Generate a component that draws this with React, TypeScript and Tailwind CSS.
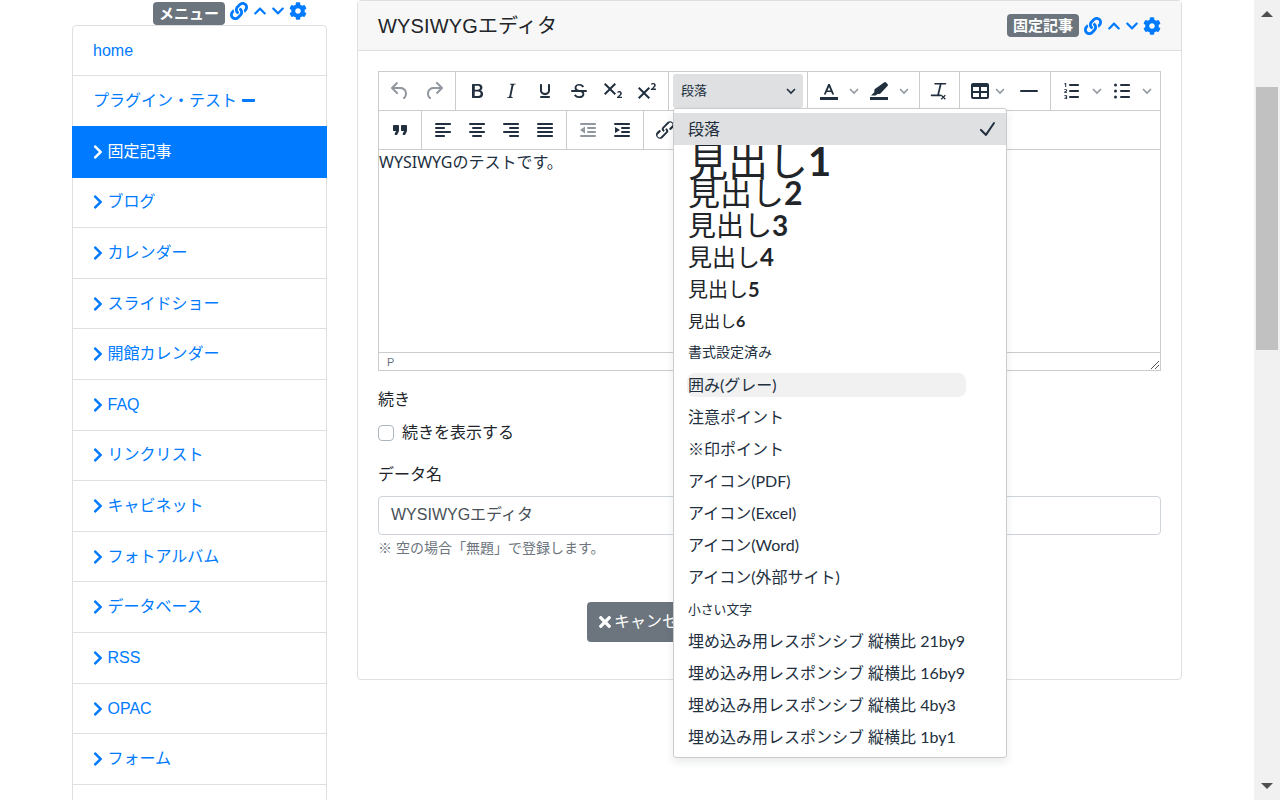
import type { ReactNode } from 'react';
import { FaChevronDown, FaChevronRight, FaChevronUp, FaCog, FaLink, FaMinus, FaTimes } from 'react-icons/fa';

const menuItems = [
  'ブログ',
  'カレンダー',
  'スライドショー',
  '開館カレンダー',
  'FAQ',
  'リンクリスト',
  'キャビネット',
  'フォトアルバム',
  'データベース',
  'RSS',
  'OPAC',
  'フォーム',
  '検索',
];

const icons: Record<string, ReactNode> = {
  undo: <path d="M6.4 8H12c3.7 0 6.2 2 6.8 5.1.6 2.7-.4 5.6-2.3 6.8a1 1 0 0 1-1-1.8c1.1-.6 1.8-2.7 1.4-4.6-.5-2.1-2.1-3.5-4.9-3.5H6.4l3.3 3.3a1 1 0 1 1-1.4 1.4l-5-5a1 1 0 0 1 0-1.4l5-5a1 1 0 0 1 1.4 1.4L6.4 8z" />,
  redo: <path d="M17.6 10H12c-2.8 0-4.4 1.4-4.9 3.5-.4 2 .3 4 1.4 4.6a1 1 0 1 1-1 1.8c-2-1.2-2.9-4.1-2.3-6.8.6-3 3-5.1 6.8-5.1h5.6l-3.3-3.3a1 1 0 1 1 1.4-1.4l5 5a1 1 0 0 1 0 1.4l-5 5a1 1 0 0 1-1.4-1.4l3.3-3.3z" />,
  bold: <path fillRule="evenodd" d="M7.8 19c-.3 0-.5 0-.6-.2l-.2-.5V5.7c0-.2 0-.4.2-.5l.6-.2h5c1.5 0 2.7.3 3.5 1 .7.6 1.1 1.4 1.1 2.5a3 3 0 0 1-.6 1.9c-.4.6-1 1-1.6 1.2.9.1 1.6.5 2.1 1.1.5.6.8 1.4.8 2.3 0 1.2-.4 2.2-1.2 2.9-.8.7-2 1.1-3.6 1.1H7.8zm4.6-8.2c1.7 0 2.6-.7 2.6-2 0-1.4-.9-2-2.6-2H9.8v4h2.6zm.4 6.2c1.9 0 2.8-.8 2.8-2.2 0-1.5-1-2.2-2.9-2.2h-3V17h3.1z" />,
  italic: <path d="M16.7 4.7l-.1.9h-.3c-.6 0-1 0-1.4.3-.3.3-.4.6-.5 1.1l-2.1 9.8v.6c0 .5.4.8 1.4.8h.2l-.2.8H8l.2-.8h.2c1.1 0 1.8-.5 2-1.5l2-9.8.1-.5c0-.6-.4-.8-1.4-.8h-.3l.2-.9h5.8z" />,
  underline: <path d="M16 5c.6 0 1 .4 1 1v5.5a4 4 0 0 1-.4 1.8l-1 1.4a5.3 5.3 0 0 1-5.5 1 5 5 0 0 1-1.6-1c-.5-.4-.8-.9-1.1-1.4a4 4 0 0 1-.4-1.8V6c0-.6.4-1 1-1s1 .4 1 1v5.5c0 .3 0 .6.2 1l.6.7a3.3 3.3 0 0 0 2.2.8 3.4 3.4 0 0 0 2.2-.8c.3-.2.4-.5.6-.8l.2-.9V6c0-.6.4-1 1-1zM8 17h8c.6 0 1 .4 1 1s-.4 1-1 1H8a1 1 0 0 1 0-2z" />,
  strike: <path d="M15.6 8.5c-.5-.7-1-1.1-1.3-1.3-.6-.4-1.3-.6-2-.6-2.7 0-2.8 1.7-2.8 2.1 0 1.6 1.8 2 3.2 2.3 4.4.9 4.6 2.8 4.6 3.9 0 1.4-.7 4.1-5 4.1A6.2 6.2 0 0 1 7 16.4l1.5-1.1c.4.6 1.6 2 3.7 2 1.6 0 2.5-.4 3-1.2.4-.8.3-2-.8-2.6-.7-.4-1.6-.7-2.9-1-1-.2-3.9-.8-3.9-3.6C7.6 6 10.3 5 12.4 5c2.9 0 4.2 1.6 4.7 2.4l-1.5 1.1zM5 11h14a1 1 0 0 1 0 2H5a1 1 0 0 1 0-2z" />,
  sub: <path d="M10.4 10l4.6 4.6-1.4 1.4L9 11.4 4.4 16 3 14.6 7.6 10 3 5.4 4.4 4 9 8.6 13.6 4 15 5.4 10.4 10zM21 19h-5v-1l1-.8 1.7-1.6c.3-.4.5-.8.5-1.2 0-.3 0-.6-.2-.7-.2-.2-.5-.3-.9-.3a2 2 0 0 0-.8.2l-.7.3-.4-1.1 1-.6 1.2-.2c.8 0 1.4.3 1.8.7.4.4.6.9.6 1.5s-.2 1.1-.5 1.6a8 8 0 0 1-1.3 1.3l-.6.6h2.6V19z" />,
  sup: <path d="M15 9.4L10.4 14l4.6 4.6-1.4 1.4L9 15.4 4.4 20 3 18.6 7.6 14 3 9.4 4.4 8 9 12.6 13.6 8 15 9.4zm5.9 1.6h-5v-1l1-.8 1.7-1.6c.3-.5.5-.9.5-1.3 0-.3 0-.5-.2-.7-.2-.2-.5-.3-.9-.3l-.8.2-.7.4-.4-1.2c.2-.2.5-.4 1-.5.3-.2.8-.2 1.2-.2.8 0 1.4.2 1.8.6.4.4.6 1 .6 1.6 0 .5-.2 1-.5 1.5l-1.3 1.4-.6.5h2.6V11z" />,
  textColor: (
    <>
      <path fillRule="evenodd" d="M12.8 5l4.4 10.6h-2l-1-2.6H9.8l-1 2.6h-2L11.2 5h1.6zm-.8 2.9L10.5 11.4h3L12 7.9z" />
      <rect x="3" y="18" width="18" height="3" />
    </>
  ),
  highlight: (
    <>
      <path d="M17 3.4a1.5 1.5 0 0 1 2 0l1.500 1.500a1.500 1.500 0 0 1 0 2.100l-6.800 7.300a2 2 0 0 1-1.400.6H10.500L8.500 16.500H4l3.300-3.300v-1.700c0-.5.2-1 .6-1.400L17 3.400z" />
      <rect x="3" y="18" width="18" height="3" />
    </>
  ),
  removeFormat: (
    <>
      <path d="M9 4h10.500a.8.8 0 0 1 0 1.600h-4l-2.400 10h1.400a.8.8 0 0 1 0 1.600H5.500a.8.8 0 0 1 0-1.600h5.800l2.400-10H9A.8.8 0 0 1 9 4z" />
      <path d="M15.700 15.700l1.600 1.600 1.600-1.600.9.900-1.600 1.600 1.600 1.600-.9.900-1.600-1.600-1.600 1.600-.9-.9 1.600-1.600-1.600-1.600z" />
    </>
  ),
  table: <path fillRule="evenodd" d="M19 4a2 2 0 0 1 2 2v12a2 2 0 0 1-2 2H5a2 2 0 0 1-2-2V6c0-1.100.9-2 2-2h14zM5 14v4h6v-4H5zm8 0v4h6v-4h-6zm0-6v4h6V8h-6zM5 8v4h6V8H5z" />,
  hr: <path d="M4 11h16a1 1 0 0 1 0 2H4a1 1 0 0 1 0-2z" />,
  numlist: (
    <>
      <path d="M10 17h8c.6 0 1 .4 1 1s-.4 1-1 1h-8a1 1 0 0 1 0-2zm0-6h8c.6 0 1 .4 1 1s-.4 1-1 1h-8a1 1 0 0 1 0-2zm0-6h8c.6 0 1 .4 1 1s-.4 1-1 1h-8a1 1 0 1 1 0-2z" />
      <path d="M5.200 4h1v4h-1V5.100l-.8.300V4.500L5.200 4zM4.300 10.300h2.200c.4 0 .6.300.6.600v1c0 .3-.2.5-.5.600l-1.300.5v.2h1.800v.8H4.300v-1.200c0-.3.2-.5.5-.6l1.300-.5v-.6H4.300v-.8zM4.300 16.300h2.800v3.700H4.300v-.8h1.800v-.7H4.800v-.7h1.300v-.7H4.300v-.8z" />
    </>
  ),
  bullist: (
    <>
      <path d="M11 5h8c.6 0 1 .4 1 1s-.4 1-1 1h-8a1 1 0 0 1 0-2zm0 6h8c.6 0 1 .4 1 1s-.4 1-1 1h-8a1 1 0 0 1 0-2zm0 6h8c.6 0 1 .4 1 1s-.4 1-1 1h-8a1 1 0 0 1 0-2z" />
      <circle cx="5.500" cy="6" r="1.500" />
      <circle cx="5.500" cy="12" r="1.500" />
      <circle cx="5.500" cy="18" r="1.500" />
    </>
  ),
  quote: <path d="M7.500 17h.9c.4 0 .7-.2.9-.6L11 13V8c0-.6-.4-1-1-1H6a1 1 0 0 0-1 1v4c0 .6.4 1 1 1h2l-1.300 2.700a1 1 0 0 0 .8 1.300zm8 0h.9c.4 0 .7-.2.9-.6L19 13V8c0-.6-.4-1-1-1h-4a1 1 0 0 0-1 1v4c0 .6.4 1 1 1h2l-1.300 2.700a1 1 0 0 0 .8 1.300z" />,
  alignLeft: <path d="M5 5h14c.6 0 1 .4 1 1s-.4 1-1 1H5a1 1 0 1 1 0-2zm0 4h8c.6 0 1 .4 1 1s-.4 1-1 1H5a1 1 0 1 1 0-2zm0 8h8c.6 0 1 .4 1 1s-.4 1-1 1H5a1 1 0 0 1 0-2zm0-4h14c.6 0 1 .4 1 1s-.4 1-1 1H5a1 1 0 0 1 0-2z" />,
  alignCenter: <path d="M5 5h14c.6 0 1 .4 1 1s-.4 1-1 1H5a1 1 0 1 1 0-2zm3 4h8c.6 0 1 .4 1 1s-.4 1-1 1H8a1 1 0 1 1 0-2zm0 8h8c.6 0 1 .4 1 1s-.4 1-1 1H8a1 1 0 0 1 0-2zm-3-4h14c.6 0 1 .4 1 1s-.4 1-1 1H5a1 1 0 0 1 0-2z" />,
  alignRight: <path d="M5 5h14c.6 0 1 .4 1 1s-.4 1-1 1H5a1 1 0 1 1 0-2zm6 4h8c.6 0 1 .4 1 1s-.4 1-1 1h-8a1 1 0 0 1 0-2zm0 8h8c.6 0 1 .4 1 1s-.4 1-1 1h-8a1 1 0 0 1 0-2zm-6-4h14c.6 0 1 .4 1 1s-.4 1-1 1H5a1 1 0 0 1 0-2z" />,
  justify: <path d="M5 5h14c.6 0 1 .4 1 1s-.4 1-1 1H5a1 1 0 1 1 0-2zm0 4h14c.6 0 1 .4 1 1s-.4 1-1 1H5a1 1 0 1 1 0-2zm0 4h14c.6 0 1 .4 1 1s-.4 1-1 1H5a1 1 0 0 1 0-2zm0 4h14c.6 0 1 .4 1 1s-.4 1-1 1H5a1 1 0 0 1 0-2z" />,
  outdent: <path d="M5 5h14c.6 0 1 .4 1 1s-.4 1-1 1H5a1 1 0 1 1 0-2zm7 4h7c.6 0 1 .4 1 1s-.4 1-1 1h-7a1 1 0 0 1 0-2zm0 4h7c.6 0 1 .4 1 1s-.4 1-1 1h-7a1 1 0 0 1 0-2zm-7 4h14a1 1 0 0 1 0 2H5a1 1 0 0 1 0-2zm4-8.500v7L4 12l5-3.500z" />,
  indent: <path d="M5 5h14c.6 0 1 .4 1 1s-.4 1-1 1H5a1 1 0 1 1 0-2zm7 4h7c.6 0 1 .4 1 1s-.4 1-1 1h-7a1 1 0 0 1 0-2zm0 4h7c.6 0 1 .4 1 1s-.4 1-1 1h-7a1 1 0 0 1 0-2zm-7 4h14a1 1 0 0 1 0 2H5a1 1 0 0 1 0-2zM5 9l5 3-5 3V9z" />,
  link: <path d="M6.200 12.300a1 1 0 0 1 1.400 1.400l-2 2a2 2 0 1 0 2.600 2.800l4.800-4.800a1 1 0 0 0 0-1.400 1 1 0 1 1 1.300-1.400 3 3 0 0 1 0 4.200l-4.800 4.800a4 4 0 0 1-5.600-5.600l2.300-2.400zm11.600-.6a1 1 0 0 1-1.400-1.400l2-2a2 2 0 1 0-2.600-2.800l-4.800 4.800a1 1 0 0 0 0 1.400 1 1 0 1 1-1.300 1.400 3 3 0 0 1 0-4.200l4.800-4.800a4 4 0 0 1 5.600 5.600l-2.300 2.400z" />,
};

function ToolIcon({ name, dim }: { name: string; dim?: boolean }) {
  return (
    <svg viewBox="0 0 24 24" className={`size-6 fill-current ${dim ? 'text-[#222f3e]/50' : 'text-[#222f3e]'}`}>
      {icons[name]}
    </svg>
  );
}

function Chevron() {
  return (
    <svg viewBox="0 0 10 10" className="size-[10px] fill-none stroke-[#222f3e]/50 stroke-[1.6]">
      <path d="M1 3l4 4 4-4" />
    </svg>
  );
}

function Btn({ name, dim }: { name: string; dim?: boolean }) {
  return (
    <div className="flex h-[34px] w-[34px] shrink-0 items-center justify-center">
      <ToolIcon name={name} dim={dim} />
    </div>
  );
}

function Caret() {
  return (
    <div className="flex h-[34px] w-4 shrink-0 items-center justify-center">
      <Chevron />
    </div>
  );
}

function Group({ children, className = '' }: { children: ReactNode; className?: string }) {
  return <div className={`flex h-full items-center border-r border-[#ccc] px-1 ${className}`}>{children}</div>;
}

function Toolbar() {
  return (
    <>
      <div className="flex h-[39px] items-center border-b border-[#ccc]">
        <Group>
          <Btn name="undo" dim />
          <Btn name="redo" dim />
        </Group>
        <Group>
          <Btn name="bold" />
          <Btn name="italic" />
          <Btn name="underline" />
          <Btn name="strike" />
          <Btn name="sub" />
          <Btn name="sup" />
        </Group>
        <Group>
          <div className="flex h-[34px] w-[130px] items-center justify-between rounded-[3px] bg-[#dee0e2] pl-2 pr-[7px] leading-none text-[#222f3e]">
            <span className="mb-[3px] font-['Noto_Sans_CJK_JP',sans-serif] text-[13px]">段落</span>
            <svg viewBox="0 0 10 10" className="size-[10px] fill-none stroke-[#222f3e] stroke-[1.6]">
              <path d="M1 3l4 4 4-4" />
            </svg>
          </div>
        </Group>
        <Group className="pr-[7px]">
          <Btn name="textColor" />
          <Caret />
          <Btn name="highlight" />
          <Caret />
        </Group>
        <Group className="pl-px">
          <Btn name="removeFormat" />
        </Group>
        <Group>
          <div className="flex h-[34px] w-[48px] items-center pl-1">
            <ToolIcon name="table" />
            <div className="ml-[3px]">
              <Chevron />
            </div>
          </div>
          <Btn name="hr" />
        </Group>
        <div className="flex h-full items-center px-1">
          <Btn name="numlist" />
          <Caret />
          <Btn name="bullist" />
          <Caret />
        </div>
      </div>
      <div className="flex h-[39px] items-center border-b border-[#ccc]">
        <Group>
          <Btn name="quote" />
        </Group>
        <Group>
          <Btn name="alignLeft" />
          <Btn name="alignCenter" />
          <Btn name="alignRight" />
          <Btn name="justify" />
        </Group>
        <Group>
          <Btn name="outdent" dim />
          <Btn name="indent" />
        </Group>
        <div className="flex h-full items-center px-1">
          <Btn name="link" />
        </div>
      </div>
    </>
  );
}

function Option({ children, className = '' }: { children: ReactNode; className?: string }) {
  return (
    <div className={`flex h-8 items-center whitespace-nowrap pl-[14px] text-[#222f3e] ${className}`}>{children}</div>
  );
}

function Heading({ size, n }: { size: string; n: number }) {
  return (
    <Option>
      <span className={`leading-none text-[#212529] ${size}`}>
        見出し<span className="font-bold">{n}</span>
      </span>
    </Option>
  );
}

function StyleMenu() {
  return (
    <div className="absolute left-[673px] top-[108px] z-10 h-[650px] w-[334px] rounded-[3px] border border-[#ccc] bg-white pt-1 font-['Lato','Noto_Sans_CJK_JP',sans-serif] text-[16px] shadow-[0_4px_8px_0_rgba(34,47,62,0.1)]">
      <Option className="relative bg-[#dee0e2]">
        <span>段落</span>
        <svg viewBox="0 0 24 24" className="absolute right-[7px] top-1 size-6 fill-[#222f3e]">
          <path d="M18.200 5.400a1 1 0 0 1 1.600 1.200l-8 12a1 1 0 0 1-1.500.1l-5-5a1 1 0 1 1 1.400-1.400l4.100 4 7.400-10.900z" />
        </svg>
      </Option>
      <Heading size="text-[40px]" n={1} />
      <Heading size="text-[32px]" n={2} />
      <Heading size="text-[28px]" n={3} />
      <Heading size="text-[24px]" n={4} />
      <Heading size="text-[20px]" n={5} />
      <Heading size="text-[16px]" n={6} />
      <Option className="text-[14px]">
        <span className="mb-[2px]">書式設定済み</span>
      </Option>
      <Option>
        <span className="-ml-px block w-[279px] rounded-lg bg-[#f1f1f1] pl-px leading-6">囲み(グレー)</span>
      </Option>
      <Option>注意ポイント</Option>
      <Option>※印ポイント</Option>
      <Option>アイコン(PDF)</Option>
      <Option>アイコン(Excel)</Option>
      <Option>アイコン(Word)</Option>
      <Option>アイコン(外部サイト)</Option>
      <Option className="text-[12.8px]">小さい文字</Option>
      <Option>埋め込み用レスポンシブ 縦横比 21by9</Option>
      <Option>埋め込み用レスポンシブ 縦横比 16by9</Option>
      <Option>埋め込み用レスポンシブ 縦横比 4by3</Option>
      <Option>埋め込み用レスポンシブ 縦横比 1by1</Option>
    </div>
  );
}

function FrameActions() {
  return (
    <div className="flex items-center text-[#007bff]">
      <FaLink className="ml-[5px] size-[18px]" />
      <FaChevronUp className="ml-[5px] size-[14px]" />
      <FaChevronDown className="ml-1 size-[14px]" />
      <FaCog className="ml-1 size-[18px]" />
    </div>
  );
}

function Badge({ children }: { children: ReactNode }) {
  return (
    <span className="inline-block h-[23px] rounded-[4px] bg-[#6c757d] px-[6px] text-[15px] font-bold leading-[23px] text-white">
      {children}
    </span>
  );
}

export default function App() {
  return (
    <div className="relative flex h-screen w-[1280px] overflow-hidden bg-white font-['Liberation_Sans','Noto_Sans_CJK_JP',sans-serif] text-[16px] leading-6 text-[#212529]">
      <div className="flex w-[1254px] shrink-0 pl-[72px]">
        <aside className="w-[255px] shrink-0">
          <div className="flex h-[25px] items-start justify-end pr-5 pt-[2px]">
            <Badge>メニュー</Badge>
            <FrameActions />
          </div>
          <nav className="rounded-t-[4px] border border-[#dfdfdf] text-[#007bff]">
            <div className="flex h-[50px] items-center border-b border-[#dfdfdf] px-5">home</div>
            <div className="flex h-[50.62px] items-center border-b border-[#dfdfdf] px-5">
              プラグイン・テスト
              <FaMinus className="ml-[4px] size-[15px]" />
            </div>
            <div className="-mx-px -mt-px flex h-[52px] items-center bg-[#007bff] px-[21px] text-white">
              <FaChevronRight className="mr-[4.5px] h-4 w-[10px]" />
              固定記事
            </div>
            {menuItems.map((label) => (
              <div key={label} className="flex h-[50.62px] items-center border-b border-[#dfdfdf] px-5">
                <FaChevronRight className="mr-[4.5px] h-4 w-[10px]" />
                {label}
              </div>
            ))}
          </nav>
        </aside>

        <main className="ml-[30px] w-[825px] shrink-0">
          <div className="h-[680px] rounded-[4px] border border-[#dfdfdf]">
            <div className="flex h-[50px] items-center justify-between border-b border-[#dfdfdf] bg-[#f7f7f7] px-5">
              <h2 className="text-[20px] leading-6 tracking-[0.15px]">WYSIWYGエディタ</h2>
              <div className="flex items-center">
                <Badge>固定記事</Badge>
                <FrameActions />
              </div>
            </div>
            <div className="px-5 pt-5">
              <div className="h-[300px] w-[783px] border border-[#ccc]">
                <Toolbar />
                <div className="h-[202px] font-['Noto_Sans','Noto_Sans_CJK_JP',sans-serif] text-[16px] leading-6 text-[#222f3e]">
                  WYSIWYGのテストです。
                </div>
                <div className="relative flex h-[18px] items-center border-t border-[#ccc] pl-2 text-[11px] text-[#222f3e]/70">
                  P
                  <svg viewBox="0 0 10 10" className="absolute bottom-0 right-0 size-[10px] stroke-[#555] stroke-1">
                    <path d="M1 9l8-8M5 9l4-4" />
                  </svg>
                </div>
              </div>
              <div className="mt-[17px]">続き</div>
              <label className="mt-[9px] flex items-center">
                <span className="block size-4 rounded-[4px] border border-[#adb5bd] bg-white" />
                <span className="ml-2">続きを表示する</span>
              </label>
              <div className="mt-[18px]">データ名</div>
              <div className="mt-[9px] flex h-[39px] w-[783px] items-center rounded-[4px] border border-[#ced4da] px-3 text-[#495057]">
                <span className="mb-px">WYSIWYGエディタ</span>
              </div>
              <p className="mt-px text-[14px] leading-6 text-[#6c757d]">※ 空の場合「無題」で登録します。</p>
              <div className="mt-[42px] flex justify-center gap-2">
                <div className="flex h-10 w-[171px] items-center rounded-[4px] bg-[#6c757d] px-3 text-white">
                  <FaTimes className="mr-[3px] h-[18px] w-3" />
                  キャンセル
                </div>
                <div className="flex h-10 w-[186px] items-center justify-center rounded-[4px] bg-[#007bff] px-3 text-white">
                  決定
                </div>
              </div>
            </div>
          </div>
        </main>
      </div>

      <StyleMenu />

      <div className="flex h-screen w-[26px] shrink-0 flex-col items-center bg-[#f1f1f1]">
        <svg viewBox="0 0 12 6" className="mt-[11px] h-[6px] w-3 fill-[#505050]">
          <path d="M6 0l6 6H0z" />
        </svg>
        <div className="mt-[70px] h-[263px] w-[22px] bg-[#c1c1c1]" />
        <svg viewBox="0 0 12 6" className="mb-[11px] mt-auto h-[6px] w-3 fill-[#505050]">
          <path d="M0 0h12L6 6z" />
        </svg>
      </div>
    </div>
  );
}
